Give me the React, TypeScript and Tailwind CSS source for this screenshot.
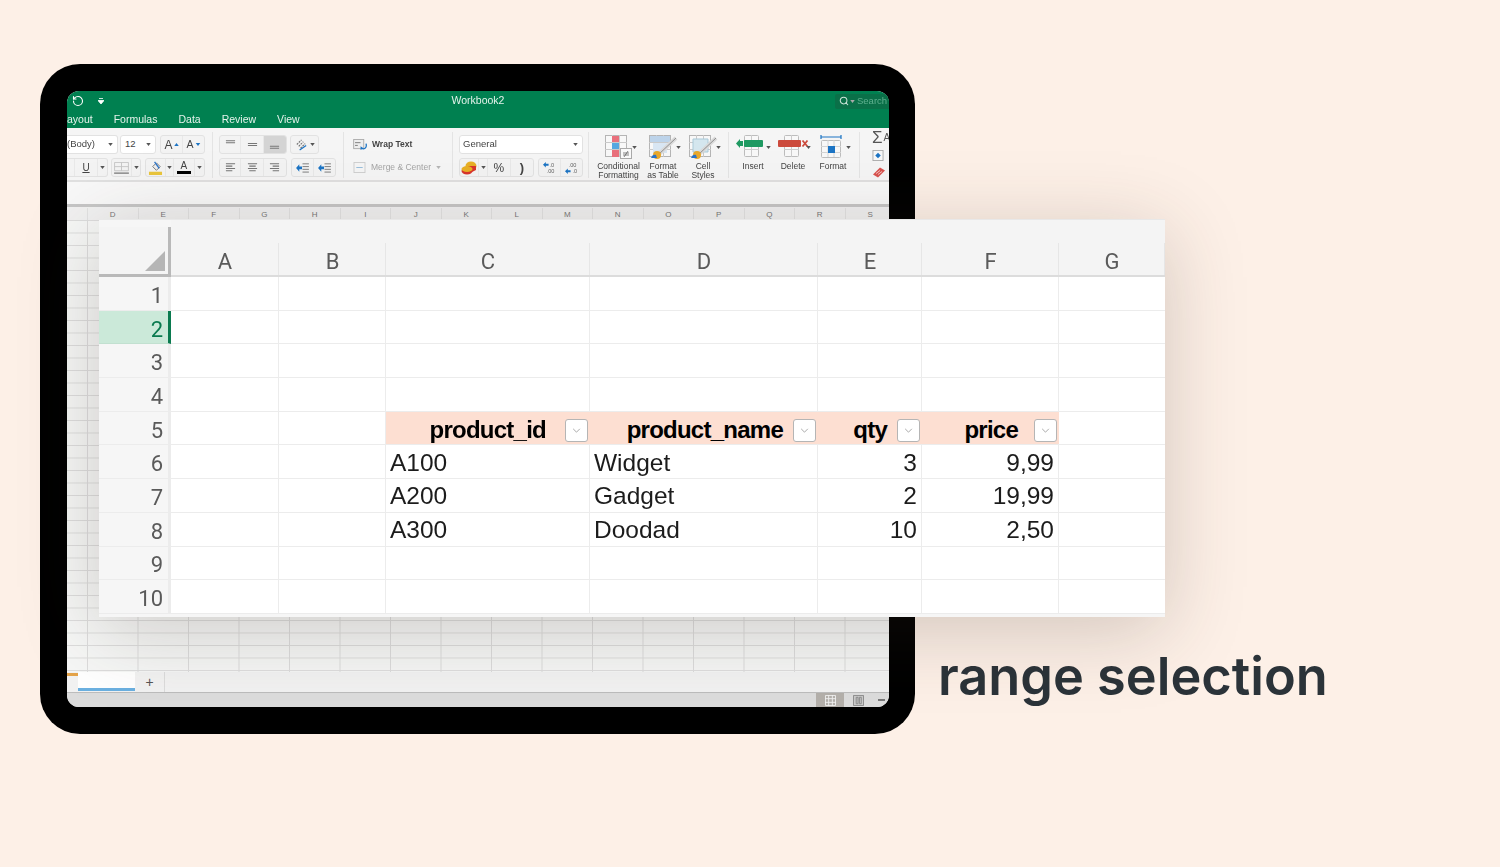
import { RotateCcw, Search } from "lucide-react";

const sheetCols = ["D", "E", "F", "G", "H", "I", "J", "K", "L", "M", "N", "O", "P", "Q", "R", "S"];

const rows = [
  { n: 1 },
  { n: 2, active: true },
  { n: 3 },
  { n: 4 },
  { n: 5, head: ["product_id", "product_name", "qty", "price"] },
  { n: 6, data: ["A100", "Widget", "3", "9,99"] },
  { n: 7, data: ["A200", "Gadget", "2", "19,99"] },
  { n: 8, data: ["A300", "Doodad", "10", "2,50"] },
  { n: 9 },
  { n: 10 },
];

const Caret = ({ className = "" }: { className?: string }) => (
  <svg viewBox="0 0 6 4" className={`h-[3px] w-[5px] shrink-0 ${className}`}>
    <path d="M0 0h6L3 4z" fill="#555" />
  </svg>
);

const Sep = ({ className }: { className: string }) => (
  <div className={`mt-[4px] h-[46px] w-px shrink-0 bg-[#e4e4e4] ${className}`} />
);

const Seg = ({ className, children }: { className: string; children: React.ReactNode }) => (
  <div className={`flex h-[19px] shrink-0 items-center overflow-hidden rounded-[3px] border border-[#e2e2e2] bg-[#f3f3f3] ${className}`}>
    {children}
  </div>
);

const Cell = ({ className = "", children }: { className?: string; children?: React.ReactNode }) => (
  <div className={`flex h-full items-center justify-center border-r border-[#e8e8e8] last:border-r-0 ${className}`}>{children}</div>
);

const Lines = ({ d }: { d: string }) => (
  <svg viewBox="0 0 14 12" className="h-[11px] w-[13px]">
    <path d={d} stroke="#777" strokeWidth="1.1" fill="none" />
  </svg>
);

const Indent = () => (
  <svg viewBox="0 0 14 12" className="h-[11px] w-[13px]">
    <path d="M7 2h7M7 5h7M7 8h7M7 11h7" stroke="#777" strokeWidth="1" />
    <path d="M0 6.5l3.5-4v2.500h3v3h-3v2.500z" fill="#1c74c4" />
  </svg>
);

const SmallGrid = ({ children }: { children?: React.ReactNode }) => (
  <svg viewBox="0 0 36 24" className="h-[24px] w-[36px]">
    <rect x="4.5" y="0.5" width="21" height="21" fill="#f8f8f8" stroke="#b5b5b5" />
    <path d="M4 7.5h22M4 14.5h22M11.5 0v22M18.5 0v22" stroke="#c9c9c9" />
    {children}
  </svg>
);

const Brush = () => (
  <>
    <path d="M13 20L31 3" stroke="#d9d9d9" strokeWidth="4" />
    <path d="M13 20L31 3" stroke="#8f8f8f" strokeWidth="1" />
    <circle cx="12" cy="20" r="4" fill="#e9a92c" />
    <path d="M6 23c1-3 3-4 5-3l1 3z" fill="#2b74c9" />
  </>
);

const Caption = ({ className, lines, icon }: { className: string; lines: string[]; icon: React.ReactNode }) => (
  <div className={`flex shrink-0 flex-col items-center pt-[7px] ${className}`}>
    <div className="flex h-[24px] items-center">
      {icon}
      <Caret className="-ml-[5px]" />
    </div>
    <div className="mt-[3px] text-center text-[8.5px] leading-[9px] text-[#444]">
      {lines.map((l) => (
        <div key={l} className="whitespace-nowrap">{l}</div>
      ))}
    </div>
  </div>
);

const Ribbon = () => (
  <div className="flex h-[52px] shrink-0 bg-[#f5f5f5] text-[#444]">
    <div className="flex w-[138px] shrink-0 flex-col gap-[4px] pt-[7px]">
      <div className="flex">
        <div className="flex h-[19px] w-[51px] items-center justify-between rounded-r-[3px] border border-l-0 border-[#e2e2e2] bg-white pr-[4px] text-[9.5px]">
          (Body)
          <Caret />
        </div>
        <div className="ml-[2px] flex h-[19px] w-[36px] items-center justify-between rounded-[3px] border border-[#e2e2e2] bg-white px-[4px] text-[9.5px]">
          12
          <Caret />
        </div>
        <Seg className="ml-[4px] w-[45px]">
          <Cell className="w-[23px] gap-[1px] text-[12px]">
            A
            <svg viewBox="0 0 6 4" className="h-[3px] w-[5px]"><path d="M0 4h6L3 0z" fill="#1c74c4" /></svg>
          </Cell>
          <Cell className="w-[22px] gap-[1px] text-[10.5px]">
            A
            <svg viewBox="0 0 6 4" className="h-[3px] w-[6px]"><path d="M0 0h6L3 4z" fill="#1c74c4" /></svg>
          </Cell>
        </Seg>
      </div>
      <div className="flex">
        <Seg className="w-[41px] rounded-l-none border-l-0">
          <Cell className="w-[8px]" />
          <Cell className="w-[23px] text-[10px] underline">U</Cell>
          <Cell className="w-[9px]"><Caret /></Cell>
        </Seg>
        <Seg className="ml-[3px] w-[30px]">
          <Cell className="w-[21px]">
            <svg viewBox="0 0 16 13" className="h-[12px] w-[15px]">
              <path d="M.5.5h15v9H.5zM8 .5v9M.5 5h15" stroke="#c4c4c4" fill="none" />
              <path d="M0 12h16" stroke="#777" strokeWidth="1.5" />
            </svg>
          </Cell>
          <Cell className="w-[8px]"><Caret /></Cell>
        </Seg>
        <Seg className="ml-[4px] w-[60px]">
          <Cell className="w-[20px]">
            <svg viewBox="0 0 16 15" className="h-[14px] w-[15px]">
              <path d="M5 6l4-4 4 4-4 4z" fill="#eee" stroke="#777" />
              <path d="M7 1l5 7" stroke="#2b74c9" strokeWidth="1.4" />
              <rect x="1" y="11.5" width="14" height="3.5" fill="#eac63c" />
            </svg>
          </Cell>
          <Cell className="w-[8px]"><Caret /></Cell>
          <Cell className="w-[22px]">
            <div className="flex flex-col items-center text-[10px] leading-[9px]">
              A
              <div className="mt-[1px] h-[3px] w-[14px] bg-black" />
            </div>
          </Cell>
          <Cell className="w-[9px]"><Caret /></Cell>
        </Seg>
      </div>
    </div>

    <Sep className="ml-[7px]" />

    <div className="ml-[6px] flex w-[117px] shrink-0 flex-col gap-[4px] pt-[7px]">
      <div className="flex">
        <Seg className="w-[68px]">
          <Cell className="w-[22px]"><Lines d="M2 2h10M2 4h10" /></Cell>
          <Cell className="w-[23px]"><Lines d="M2 5h10M2 7h10" /></Cell>
          <Cell className="w-[23px] bg-[#d4d4d4]"><Lines d="M2 8h10M2 10h10" /></Cell>
        </Seg>
        <Seg className="ml-[3px] w-[29px] justify-center gap-[2px]">
          <svg viewBox="0 0 14 14" className="h-[13px] w-[13px]">
            <path d="M2 7l5-5M4 9l5-5M6 11l5-5" stroke="#777" strokeWidth="1.3" strokeDasharray="2 1" />
            <path d="M5 13l7-5" stroke="#1c74c4" strokeWidth="1.3" />
          </svg>
          <Caret />
        </Seg>
      </div>
      <div className="flex">
        <Seg className="w-[68px]">
          <Cell className="w-[22px]"><Lines d="M2 2h10M2 4.500h7M2 7h10M2 9.500h7" /></Cell>
          <Cell className="w-[23px]"><Lines d="M2 2h10M3.500 4.500h7M2 7h10M3.500 9.500h7" /></Cell>
          <Cell className="w-[23px]"><Lines d="M2 2h10M5 4.500h7M2 7h10M5 9.500h7" /></Cell>
        </Seg>
        <Seg className="ml-[4px] w-[45px]">
          <Cell className="w-[23px]"><Indent /></Cell>
          <Cell className="w-[22px]"><Indent /></Cell>
        </Seg>
      </div>
    </div>

    <Sep className="ml-[7px]" />

    <div className="ml-[9px] flex w-[92px] shrink-0 flex-col pt-[7px] text-[8.5px]">
      <div className="flex h-[18px] items-center gap-[3px] font-bold text-[#444]">
        <svg viewBox="0 0 17 12" className="h-[11px] w-[16px]">
          <rect x=".5" y=".5" width="11" height="10" fill="#eee" stroke="#aaa" />
          <path d="M2 4h6M2 7h3" stroke="#777" />
          <path d="M9 10c4 2 6-1 5-5" stroke="#1c74c4" strokeWidth="1.4" fill="none" />
          <path d="M8 8v4l3-2z" fill="#1c74c4" />
        </svg>
        Wrap Text
      </div>
      <div className="mt-[5px] flex h-[18px] items-center gap-[4px] text-[#a4a4a4]">
        <svg viewBox="0 0 13 12" className="h-[11px] w-[13px]">
          <rect x=".5" y=".5" width="12" height="11" fill="#f5f5f5" stroke="#ccc" />
          <path d="M3 6h7" stroke="#8fb8d8" />
        </svg>
        <span className="ml-[1px] whitespace-nowrap">Merge &amp; Center</span>
        <Caret className="ml-[1px] opacity-40" />
      </div>
    </div>

    <Sep className="ml-[7px]" />

    <div className="ml-[6px] flex w-[124px] shrink-0 flex-col gap-[4px] pt-[7px]">
      <div className="flex h-[19px] items-center justify-between rounded-[3px] border border-[#e2e2e2] bg-white pl-[3px] pr-[4px] text-[9.5px]">
        General
        <Caret />
      </div>
      <div className="flex">
        <Seg className="w-[75px]">
          <Cell className="w-[20px]">
            <svg viewBox="0 0 16 14" className="h-[14px] w-[16px]">
              <ellipse cx="10" cy="5" rx="5.500" ry="4.500" fill="#e8b026" />
              <path d="M7 5h8v4l-4 2H7z" fill="#d9342b" />
              <ellipse cx="6" cy="10" rx="5.500" ry="3.500" fill="#d9342b" />
              <ellipse cx="6" cy="8" rx="5.500" ry="3" fill="#e8b026" />
            </svg>
          </Cell>
          <Cell className="w-[9px]"><Caret /></Cell>
          <Cell className="w-[23px] text-[12px]">%</Cell>
          <Cell className="w-[23px] text-[13px] font-bold">{")"}</Cell>
        </Seg>
        <Seg className="ml-[4px] w-[45px]">
          <Cell className="w-[23px]">
            <svg viewBox="0 0 16 14" className="h-[13px] w-[15px]">
              <path d="M1 4l3-3v2h3v2H4v2z" fill="#1c74c4" />
              <text x="8" y="6" fontSize="6" fill="#666">.0</text>
              <text x="5" y="13" fontSize="6" fill="#666">.00</text>
            </svg>
          </Cell>
          <Cell className="w-[22px]">
            <svg viewBox="0 0 16 14" className="h-[13px] w-[15px]">
              <path d="M1 11l3-3v2h3v2H4v2z" fill="#1c74c4" />
              <text x="5" y="6" fontSize="6" fill="#666">.00</text>
              <text x="9" y="13" fontSize="6" fill="#666">.0</text>
            </svg>
          </Cell>
        </Seg>
      </div>
    </div>

    <Sep className="ml-[5px] mr-[7px]" />

    <Caption
      className="w-[45px]"
      lines={["Conditional", "Formatting"]}
      icon={
        <SmallGrid>
          <path d="M11 1h7v6h-7z" fill="#e9707c" />
          <path d="M11 8h7v6h-7z" fill="#56a7e0" />
          <path d="M11 15h7v7h-7z" fill="#e9707c" />
          <rect x="19.500" y="13.500" width="11" height="10" fill="#fafafa" stroke="#aaa" />
          <path d="M22 18h6M22 20h6M27 16l-4 6" stroke="#555" strokeWidth=".7" />
        </SmallGrid>
      }
    />
    <Caption
      className="w-[44px]"
      lines={["Format", "as Table"]}
      icon={
        <SmallGrid>
          <path d="M5 1h20v6H5z" fill="#bcd3ea" />
          <path d="M8 8h14v10H8z" fill="#d8e6f3" />
          <Brush />
        </SmallGrid>
      }
    />
    <Caption
      className="w-[36px]"
      lines={["Cell", "Styles"]}
      icon={
        <SmallGrid>
          <path d="M8 4h15v13H8z" fill="#d4e6ee" stroke="#a9c9d8" />
          <Brush />
        </SmallGrid>
      }
    />

    <Sep className="ml-[7px] mr-[4px]" />

    <Caption
      className="w-[40px]"
      lines={["Insert"]}
      icon={
        <svg viewBox="0 0 36 24" className="h-[24px] w-[36px]">
          <rect x="9.500" y=".5" width="14" height="21" rx="1" fill="#f8f8f8" stroke="#bdbdbd" />
          <path d="M9 14.500h15M16.500 0v22" stroke="#ccc" />
          <rect x="9" y="5" width="19" height="7" rx="1" fill="#1f9a62" />
          <path d="M1 8.500L5 4v9z" fill="#1f9a62" />
          <rect x="4" y="6" width="4" height="5" fill="#1f9a62" />
        </svg>
      }
    />
    <Caption
      className="w-[40px]"
      lines={["Delete"]}
      icon={
        <svg viewBox="0 0 36 24" className="h-[24px] w-[36px]">
          <rect x="9.500" y=".5" width="14" height="21" rx="1" fill="#f8f8f8" stroke="#bdbdbd" />
          <path d="M9 14.500h15M16.500 0v22" stroke="#ccc" />
          <rect x="3" y="5" width="23" height="7" rx="1" fill="#cc4a3c" />
          <path d="M27.500 5.500l5 6M32.500 5.500l-5 6" stroke="#cc4a3c" strokeWidth="1.8" />
        </svg>
      }
    />
    <Caption
      className="w-[40px]"
      lines={["Format"]}
      icon={
        <svg viewBox="0 0 36 24" className="h-[24px] w-[36px]">
          <path d="M6 2h20M6 0v4M26 0v4" stroke="#1c74c4" strokeWidth="1.2" />
          <rect x="6.500" y="5.500" width="19" height="17" rx="1" fill="#f8f8f8" stroke="#bdbdbd" />
          <path d="M6 11.500h20M6 17.500h20M13 5v17M19 5v17" stroke="#d4d4d4" />
          <rect x="13" y="11" width="7" height="7" fill="#1c74c4" />
        </svg>
      }
    />

    <Sep className="ml-[6px] mr-[12px]" />

    <div className="flex shrink-0 flex-col items-start pt-[2px]">
      <div className="flex items-center text-[17px] leading-[16px] text-[#555]">
        Σ<span className="ml-[1px] text-[10px]">A</span>
      </div>
      <svg viewBox="0 0 12 12" className="mt-[4px] h-[11px] w-[12px]">
        <rect x=".5" y=".5" width="11" height="11" fill="#f8f8f8" stroke="#aaa" />
        <path d="M6 3l3 3-3 3-3-3z" fill="#1c74c4" />
      </svg>
      <svg viewBox="0 0 14 12" className="mt-[5px] h-[13px] w-[14px]">
        <path d="M1 8l7-7 5 3-7 7z" fill="#d9534f" />
        <path d="M4 7l4-3M6 8l4-3" stroke="#f4c2bf" />
      </svg>
    </div>
  </div>
);

const Workbook = () => (
  <div className="flex h-[616px] w-[822px] flex-col overflow-hidden rounded-[12px] bg-white blur-[0.45px] font-['Liberation_Sans',sans-serif]">
    <div className="h-[37px] shrink-0 bg-[#008050] text-[#e4f2eb]">
      <div className="grid h-[19px] grid-cols-[1fr_auto_1fr] items-center">
        <div className="flex items-center pl-[5px]">
          <RotateCcw size={12} strokeWidth={2.2} className="text-white" />
          <svg viewBox="0 0 6 6" className="ml-[14px] h-[6px] w-[6px]">
            <path d="M1 .5h4M0 2.500h6L3 6z" stroke="#fff" fill="#fff" strokeWidth=".8" />
          </svg>
        </div>
        <div className="text-[10.5px] leading-none">Workbook2</div>
        <div className="flex justify-end">
          <div className="mt-[1px] flex h-[15px] w-[54px] items-center gap-[2px] rounded-l-[2px] bg-[#0a7048] pl-[4px] text-[9.5px] text-[#5fb08f]">
            <Search size={10} strokeWidth={2.5} className="text-[#cfe6da]" />
            <Caret className="-ml-[1px] invert" />
            Search
          </div>
        </div>
      </div>
      <div className="flex h-[18px] items-center gap-[21px] text-[10.5px] leading-none">
        {["ayout", "Formulas", "Data", "Review", "View"].map((t) => (
          <span key={t}>{t}</span>
        ))}
      </div>
    </div>

    <Ribbon />
    <div className="h-[2px] shrink-0 bg-[#e0e0e0]" />
    <div className="h-[22px] shrink-0 bg-[#f8f8f8]" />
    <div className="h-[3px] shrink-0 bg-[#c6c6c6]" />

    <div className="flex h-[13px] shrink-0 bg-[#f1f1f1] pl-[20px] pt-px text-[8px] leading-[13px] text-[#777]">
      {sheetCols.map((c) => (
        <div key={c} className="w-[50.5px] shrink-0 border-l border-[#e2e2e2] text-center">{c}</div>
      ))}
    </div>

    <div className="flex-1 bg-[#f6f7f6] bg-[linear-gradient(#dcdcdc_1px,transparent_1px),linear-gradient(90deg,#dcdcdc_1px,transparent_1px)] bg-[size:50.5px_12.5px] bg-[position:20px_0px]" />

    <div className="flex h-[20px] shrink-0 bg-[#f2f2f2]">
      <div className="mt-[1px] h-[3px] w-[11px] bg-[#e5a44a]" />
      <div className="h-[19px] w-[57px] border-b-[3px] border-[#6bb0e0] bg-white" />
      <div className="flex w-[30px] items-center justify-center border-r border-[#dcdcdc] text-[14px] leading-none text-[#555]">+</div>
    </div>
    <div className="h-px shrink-0 bg-[#bdbdbd]" />
    <div className="flex h-[14px] shrink-0 items-center justify-end bg-[#dcdcdc] pr-[4px]">
      <div className="flex h-[14px] w-[28px] items-center justify-center bg-[#b4b0ab]">
        <svg viewBox="0 0 12 12" className="h-[11px] w-[11px]">
          <path d="M.5.5h11v11H.5zM4 0v12M8 0v12M0 4h12M0 8h12" stroke="#f1f1f1" fill="none" />
        </svg>
      </div>
      <div className="flex h-[14px] w-[28px] items-center justify-center">
        <svg viewBox="0 0 12 12" className="h-[11px] w-[11px]">
          <path d="M.5.5h11v11H.5zM3.500 2.500h2v7h-2zM7 2.500h2v7H7z" stroke="#888" fill="#c9c9c9" />
        </svg>
      </div>
      <div className="ml-[6px] h-[2px] w-[7px] bg-[#777]" />
    </div>
  </div>
);

const colBorder = "border-r border-b border-[#ececec]";
const cellText = "pt-[2px] text-[24.5px] leading-none text-[#1c1c1c]";

const FilterBtn = () => (
  <div className="flex h-[23px] w-[23px] shrink-0 items-center justify-center rounded-[3px] border border-[#b5b5b5] bg-white">
    <svg viewBox="0 0 10 6" className="h-[5px] w-[9px]">
      <path d="M1 1l4 4 4-4" stroke="#999" fill="none" />
    </svg>
  </div>
);

const HeadCell = ({ label, gap }: { label: string; gap: string }) => (
  <div className={`flex items-center justify-end border-b border-[#ececec] bg-[#fddfd2] pr-[2px] pt-[4px] ${gap}`}>
    <span className="text-[24px] font-bold leading-none tracking-[-0.75px] text-black">{label}</span>
    <FilterBtn />
  </div>
);

const Zoomed = () => (
  <div className="absolute left-[99px] top-[219px] z-10 h-[398px] w-[1066px] border-t border-[#e8e8e8] bg-[#f6f6f6] font-['Liberation_Sans',sans-serif] shadow-[0_14px_75px_rgba(60,45,35,0.22)]">
    <div className="grid grid-cols-[72px_108px_107px_204px_228px_104px_137px_106px] grid-rows-[57px_repeat(10,33.7px)]">
      <div className="flex flex-col pt-[7px]">
        <div className="flex flex-1 items-end justify-end border-r-[3px] border-b-[3px] border-[#b9b9b9] bg-[#f4f4f4] pb-[3px] pr-[3px]">
          <svg viewBox="0 0 20 20" className="h-[20px] w-[20px]">
            <path d="M20 0v20H0z" fill="#b5b5b5" />
          </svg>
        </div>
      </div>
      {["A", "B", "C", "D", "E", "F", "G"].map((c) => (
        <div key={c} className="flex items-end border-b-2 border-[#dcdcdc] bg-[#f4f4f4]">
          <div className="flex h-[32px] flex-1 items-center justify-center border-r border-[#e6e6e6] pl-[1px] pt-[5px] font-['Roboto',sans-serif] text-[22px] leading-none text-[#5a5a5a]">
            {c}
          </div>
        </div>
      ))}

      {rows.map((r) => (
        <div key={r.n} className="contents">
          <div
            className={`flex items-center justify-end border-b pr-[5px] pt-[5px] font-['Roboto',sans-serif] text-[22px] leading-none ${
              r.active
                ? "border-[#c2e0d0] border-r-[3px] border-r-[#0a7a4f] bg-[#cbe9d9] text-[#0a7a4f]"
                : "border-[#ececec] border-r-[3px] border-r-[#ececec] bg-[#f6f6f6] text-[#5a5a5a]"
            }`}
          >
            {r.n}
          </div>
          <div className={`bg-white ${colBorder}`} />
          <div className={`bg-white ${colBorder}`} />
          {r.head ? (
            <>
              <HeadCell label={r.head[0]} gap="gap-[19px]" />
              <HeadCell label={r.head[1]} gap="gap-[10px]" />
              <HeadCell label={r.head[2]} gap="gap-[10px]" />
              <HeadCell label={r.head[3]} gap="gap-[16px]" />
            </>
          ) : r.data ? (
            <>
              <div className={`flex items-center bg-white pl-[4px] ${colBorder} ${cellText}`}>{r.data[0]}</div>
              <div className={`flex items-center bg-white pl-[4px] ${colBorder} ${cellText}`}>{r.data[1]}</div>
              <div className={`flex items-center justify-end bg-white pr-[4px] ${colBorder} ${cellText}`}>{r.data[2]}</div>
              <div className={`flex items-center justify-end bg-white pr-[4px] ${colBorder} ${cellText}`}>{r.data[3]}</div>
            </>
          ) : (
            <>
              <div className={`bg-white ${colBorder}`} />
              <div className={`bg-white ${colBorder}`} />
              <div className={`bg-white ${colBorder}`} />
              <div className={`bg-white ${colBorder}`} />
            </>
          )}
          <div className="border-b border-[#ececec] bg-white" />
        </div>
      ))}
    </div>
  </div>
);

export default function App() {
  return (
    <div className="relative flex h-[867px] w-[1500px] items-start overflow-hidden bg-[#fdf0e7] pl-[40px] pt-[64px]">
      <div className="shrink-0 rounded-[40px] bg-black pb-[27px] pl-[27px] pr-[26px] pt-[27px]">
        <Workbook />
      </div>
      <Zoomed />
      <h1 className="ml-[23px] mt-[586px] whitespace-nowrap font-['Inter',sans-serif] text-[52.3px] font-semibold leading-[52px] text-[#2b3339]">
        range selection
      </h1>
    </div>
  );
}
